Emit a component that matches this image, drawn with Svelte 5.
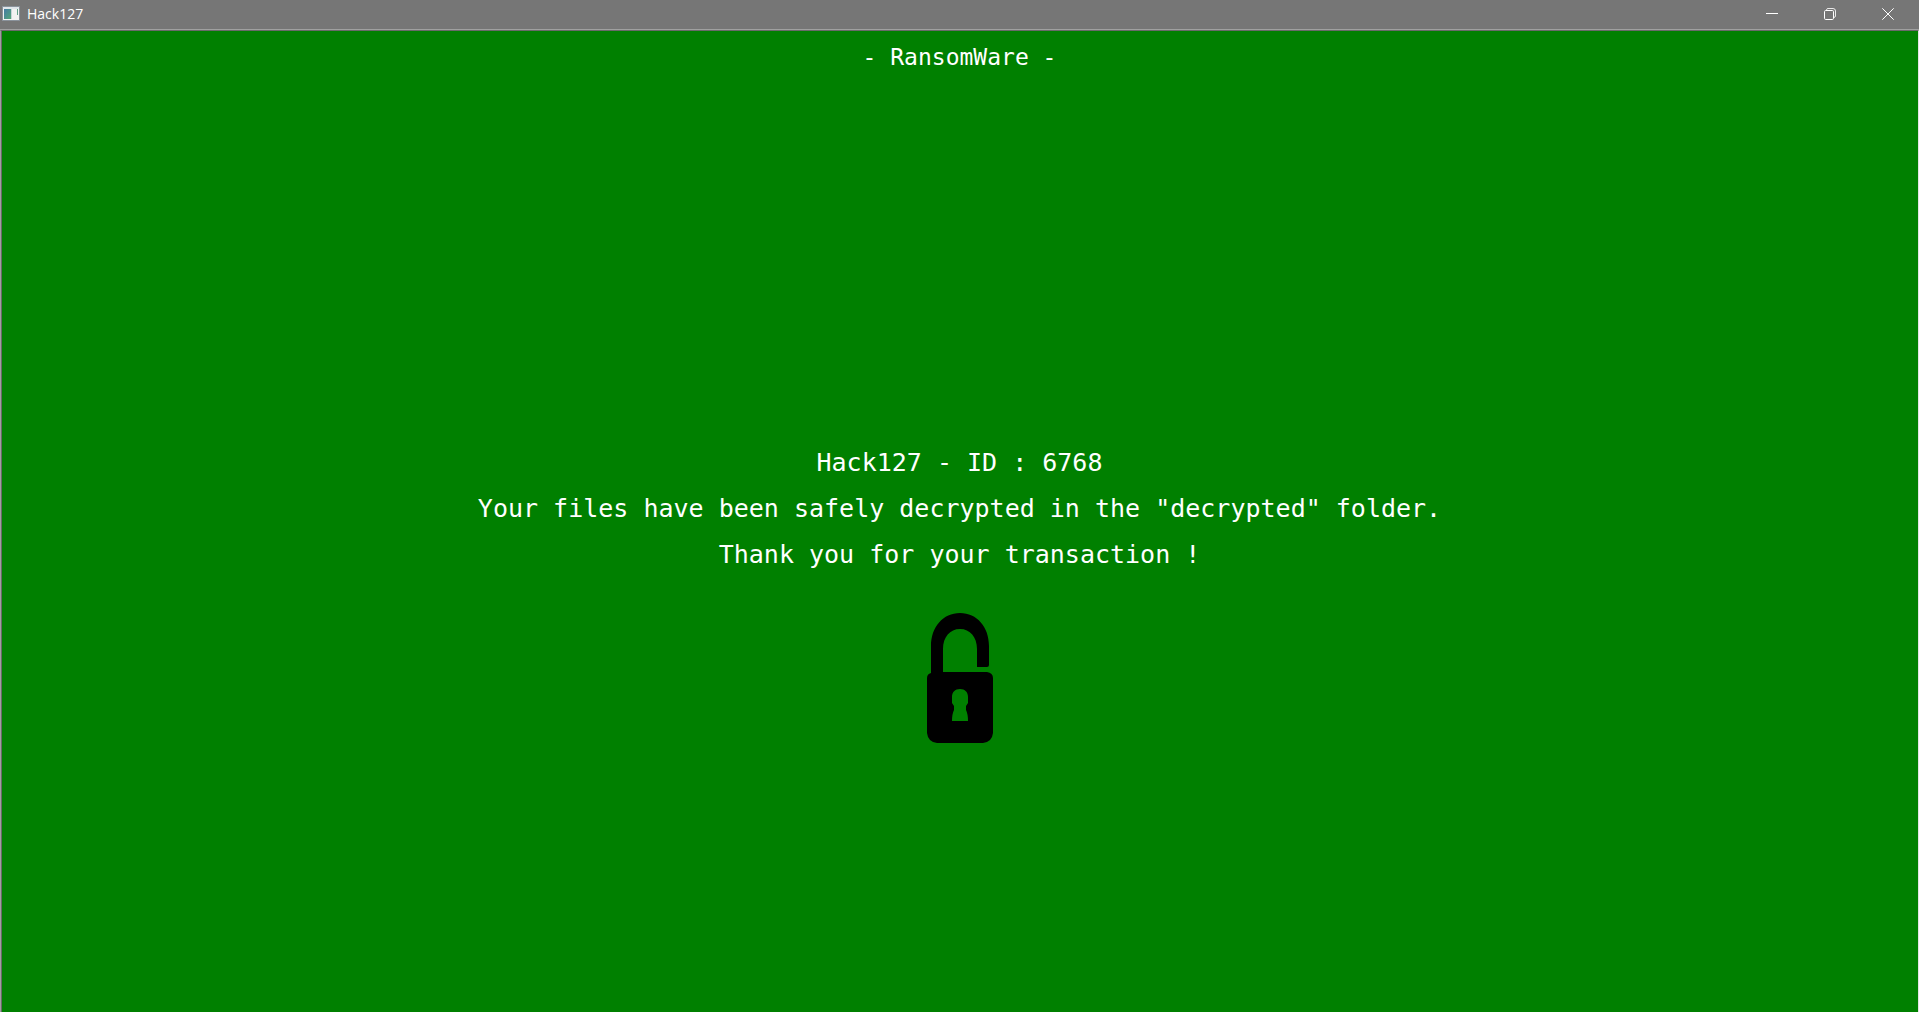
<script>
  const messages = [
    'Hack127 - ID : 6768',
    'Your files have been safely decrypted in the "decrypted" folder.',
    'Thank you for your transaction !'
  ];
</script>

<div class="window">
  <header class="titlebar">
    <svg class="app-icon" width="18" height="16" viewBox="0 0 18 16" aria-hidden="true">
      <defs>
        <linearGradient id="pane" x1="0" y1="0" x2="1" y2="1">
          <stop offset="0" stop-color="#457ba5" />
          <stop offset="1" stop-color="#55a779" />
        </linearGradient>
      </defs>
      <rect width="18" height="15" fill="#8a929b" />
      <rect x="1" y="1" width="16" height="13" fill="#f2f2f2" />
      <rect x="1" y="1" width="16" height="2" fill="#dfe5ea" />
      <rect x="2" y="3" width="7" height="10" fill="url(#pane)" />
      <rect x="9" y="3" width="1" height="10" fill="#c8d4d8" />
      <rect x="15" y="3" width="1" height="6" fill="#62a08a" />
    </svg>
    <span class="name">Hack127</span>
    <div class="controls">
      <button aria-label="Minimize">
        <svg width="12" height="12" viewBox="0 0 12 12"><path d="M0 5.5H12" /></svg>
      </button>
      <button aria-label="Restore">
        <svg width="12" height="12" viewBox="0 0 12 12">
          <path d="M2.5 2.5V1.8Q2.8.5 4 .5H9Q11.5.5 11.5 3V8Q11.5 9.4 9.5 9.5" stroke-opacity=".85" />
          <rect x=".5" y="2.5" width="9" height="9" rx="1.2" />
        </svg>
      </button>
      <button aria-label="Close">
        <svg width="12" height="12" viewBox="0 0 12 12"><path d="M.3 .3L11.7 11.7M11.7 .3L.3 11.7" /></svg>
      </button>
    </div>
  </header>

  <main>
    <h1>- RansomWare -</h1>
    <section>
      {#each messages as message}
        <p>{message}</p>
      {/each}
      <svg class="lock" width="66" height="130" viewBox="0 0 66 130" role="img" aria-label="Open padlock">
        <path
          fill-rule="evenodd"
          d="M4 60V33C4 14 16 0 33 0S62 14 62 33V52Q62 54 60 54H50V36C50 24 43 16 33 16S16 24 16 36V59H60Q66 60 66 65V120Q65 129 56 130H10Q1 129 0 120V65Q0 61 4 60ZM25 108H41Q41 101 39 97V93L41 90V84C41 79 38 76 33 76S25 79 25 84V90L27 93V97Q25 101 25 108Z"
        />
      </svg>
    </section>
  </main>
</div>

<style>
  :global(body) {
    margin: 0;
  }
  .window {
    display: flex;
    flex-direction: column;
    min-height: 100vh;
    background: #008000;
  }
  .titlebar {
    display: flex;
    align-items: center;
    box-sizing: border-box;
    height: 30px;
    padding: 0 2px 2px;
    background: #767676;
    color: #fff;
    font: 14px/20px "Open Sans", sans-serif;
    border-bottom: 1px solid #a0a0a0;
  }
  .app-icon {
    margin-right: 7px;
  }
  .controls {
    display: flex;
    align-self: stretch;
    margin-left: auto;
  }
  button {
    display: grid;
    place-items: center;
    width: 58px;
    padding: 0;
    border: 0;
    background: none;
  }
  button svg {
    fill: none;
    stroke: #fff;
  }
  main {
    flex: 1;
    border: solid #696969;
    border-width: 1px 0 0;
    border-left: 1px solid #a0a0a0;
    border-right: 1px solid #e3e3e3;
    box-shadow: inset 1px 0 #696969;
    color: #fff;
    text-align: center;
    font-family: "DejaVu Sans Mono", monospace;
  }
  h1 {
    margin: 10px 0 0;
    font-size: 23px;
    font-weight: 400;
    line-height: 32px;
  }
  section {
    padding-top: 367px;
  }
  p {
    margin: 0;
    font-size: 25px;
    line-height: 46px;
  }
  .lock {
    display: block;
    margin: 35px auto 0;
  }
</style>
